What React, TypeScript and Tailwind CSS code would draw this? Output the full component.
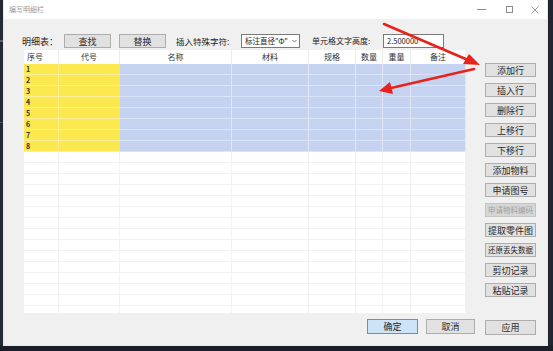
import React from "react";

const cols = [
  { name: "序号", w: "w-[35px]", align: "justify-start pl-[3px]" },
  { name: "代号", w: "w-[61px]", align: "justify-center" },
  { name: "名称", w: "w-[112px]", align: "justify-center" },
  { name: "材料", w: "w-[77px]", align: "justify-center" },
  { name: "规格", w: "w-[47px]", align: "justify-center" },
  { name: "数量", w: "w-[27px]", align: "justify-center" },
  { name: "重量", w: "w-[28px]", align: "justify-center" },
  { name: "备注", w: "w-[55px]", align: "justify-center" },
];

const sideButtons = [
  { t: "添加行" },
  { t: "插入行" },
  { t: "删除行" },
  { t: "上移行" },
  { t: "下移行" },
  { t: "添加物料" },
  { t: "申请图号" },
  { t: "申请物料编码", disabled: true },
  { t: "提取零件图" },
  { t: "还原丢失数据" },
  { t: "剪切记录" },
  { t: "粘贴记录" },
];

function Btn({
  children,
  className = "",
  small = false,
}: {
  children: React.ReactNode;
  className?: string;
  small?: boolean;
}) {
  return (
    <div
      className={
        "flex items-center justify-center border border-[#adadad] bg-[#e1e1e1] leading-none text-[#2a2a2a] whitespace-nowrap " +
        (small ? "text-[7.5px] " : "text-[9px] ") +
        className
      }
    >
      {children}
    </div>
  );
}

export default function App() {
  const dataRows = [1, 2, 3, 4, 5, 6, 7, 8];
  const emptyRows = Array.from({ length: 15 }, (_, i) => i);
  return (
    <div className="relative w-[553px] h-[351px] overflow-hidden bg-[#1d232c] font-['Noto_Sans_CJK_SC','Noto_Sans',sans-serif] flex flex-col">
      <div className="flex h-[346px]">
        {/* left dark strip */}
        <div className="w-[3px] h-full bg-[#232a33] flex flex-col">
          <div className="h-[40px]" />
          <div className="h-[2px] bg-[#5a626c]" />
          <div className="h-[80px]" />
          <div className="h-[1px] bg-[#4a525c]" />
        </div>
        {/* window */}
        <div className="w-[545px] h-full border-l border-b border-r border-[#e8e8e8] bg-[#f0f0f0] flex flex-col">
          {/* title bar */}
          <div className="h-[19px] bg-white flex items-center">
            <div className="ml-[5px] text-[7px] leading-none text-[#9a9a9a]">编写明细栏</div>
            <div className="flex-1" />
            <div className="w-[9px] h-[1px] bg-[#8a8a8a] mr-[20px]" />
            <div className="w-[7px] h-[7px] border border-[#8a8a8a] mr-[18px]" />
            <div className="relative w-[8px] h-[8px] mr-[8px]">
              <svg width="8" height="8" viewBox="0 0 8 8" className="absolute inset-0">
                <path d="M0.5 0.5 L7.5 7.5 M7.5 0.5 L0.5 7.5" stroke="#8a8a8a" strokeWidth="0.9" />
              </svg>
            </div>
          </div>
          {/* body */}
          <div className="flex-1 flex">
            {/* left section */}
            <div className="w-[471px] pl-[18px] flex flex-col">
              {/* toolbar */}
              <div className="mt-[15px] h-[14px] flex items-center text-[#222]">
                <div className="w-[40px] text-[9px] leading-none">明细表：</div>
                <Btn className="w-[47px] h-[14px] ml-[2px]">查找</Btn>
                <Btn className="w-[47px] h-[14px] ml-[8px]">替换</Btn>
                <div className="ml-[10px] w-[65px] text-[8.5px] leading-none whitespace-nowrap">插入特殊字符:</div>
                <div className="w-[59px] h-[14px] border border-[#7a7a7a] bg-white flex items-center pl-[3px] pr-[2px]">
                  <span className="text-[7.5px] leading-none whitespace-nowrap">标注直径"Φ"</span>
                  <span className="flex-1" />
                  <svg width="5" height="4" viewBox="0 0 5 4">
                    <path d="M0.5 1 L2.5 3 L4.5 1" stroke="#555" strokeWidth="0.8" fill="none" />
                  </svg>
                </div>
                <div className="ml-[12px] w-[71px] text-[8px] leading-none whitespace-nowrap">单元格文字高度:</div>
                <div className="w-[61px] h-[14px] border border-[#7a7a7a] bg-white flex items-center pl-[3px]">
                  <span className="text-[7.5px] leading-none">2.500000</span>
                </div>
              </div>
              {/* table */}
              <div className="mt-[2px] ml-[2px] w-[442px] h-[263px] bg-white overflow-hidden flex flex-col">
                <div className="h-[14px] flex shrink-0">
                  {cols.map((c) => (
                    <div
                      key={c.name}
                      className={c.w + " h-full flex items-center border-r border-[#ececec] text-[8px] leading-none text-[#333] " + c.align}
                    >
                      {c.name}
                    </div>
                  ))}
                </div>
                {dataRows.map((r) => (
                  <div key={r} className="h-[11px] flex shrink-0">
                    {cols.map((c, i) => (
                      <div
                        key={c.name}
                        className={
                          c.w +
                          " h-full flex items-center border-b " +
                          (i < 2
                            ? "bg-[#fbe84e] border-[#fdf09a] " + (i === 0 ? "border-r border-r-[#fcee8a]" : "")
                            : "bg-[#c5d3f0] border-[#dce5f7] border-r border-r-[#dfe7f7]")
                        }
                      >
                        {i === 0 && (
                          <span className="pl-[2px] text-[7px] font-bold leading-none text-[#333]">{r}</span>
                        )}
                      </div>
                    ))}
                  </div>
                ))}
                {emptyRows.map((r) => (
                  <div key={"e" + r} className="h-[11px] flex shrink-0">
                    {cols.map((c) => (
                      <div key={c.name} className={c.w + " h-full border-b border-r border-[#f1f1f1]"} />
                    ))}
                  </div>
                ))}
              </div>
              {/* bottom buttons */}
              <div className="mt-[6px] flex justify-end">
                <div className="w-[51px] h-[15px] flex items-center justify-center border border-[#5b94c8] bg-[#cce4f7] text-[9px] leading-none text-[#222]">
                  确定
                </div>
                <Btn className="w-[49px] h-[15px] ml-[8px]">取消</Btn>
              </div>
            </div>
            {/* right section */}
            <div className="ml-[10px] w-[51px] flex flex-col">
              <div className="mt-[44px] flex flex-col gap-[6px]">
                {sideButtons.map((b) =>
                  b.disabled ? (
                    <div
                      key={b.t}
                      className="w-[51px] h-[14px] flex items-center justify-center border border-[#c4c4c4] bg-[#d6d6d6] text-[7.5px] leading-none text-[#a2a2a2] whitespace-nowrap overflow-hidden"
                    >
                      {b.t}
                    </div>
                  ) : (
                    <Btn key={b.t} small={b.t.length > 5} className="w-[51px] h-[14px] overflow-hidden">
                      {b.t}
                    </Btn>
                  )
                )}
              </div>
              <Btn className="mt-[23px] w-[51px] h-[15px]">应用</Btn>
            </div>
          </div>
        </div>
        {/* right dark strip */}
        <div className="flex-1 h-full bg-[#20262f]" />
      </div>
      <div className="flex-1 bg-[#1a1f27]" />
      {/* red annotation arrows */}
      <svg className="absolute inset-0 pointer-events-none" width="553" height="351" viewBox="0 0 553 351">
        <line x1="384" y1="24" x2="468" y2="60" stroke="#e8231c" strokeWidth="2.6" strokeLinecap="round" />
        <polygon points="480,65 463,64 469,54" fill="#e8231c" />
        <line x1="474" y1="69" x2="391" y2="88" stroke="#e8231c" strokeWidth="2.6" strokeLinecap="round" />
        <polygon points="379,91 390,82 393,94" fill="#e8231c" />
      </svg>
    </div>
  );
}
